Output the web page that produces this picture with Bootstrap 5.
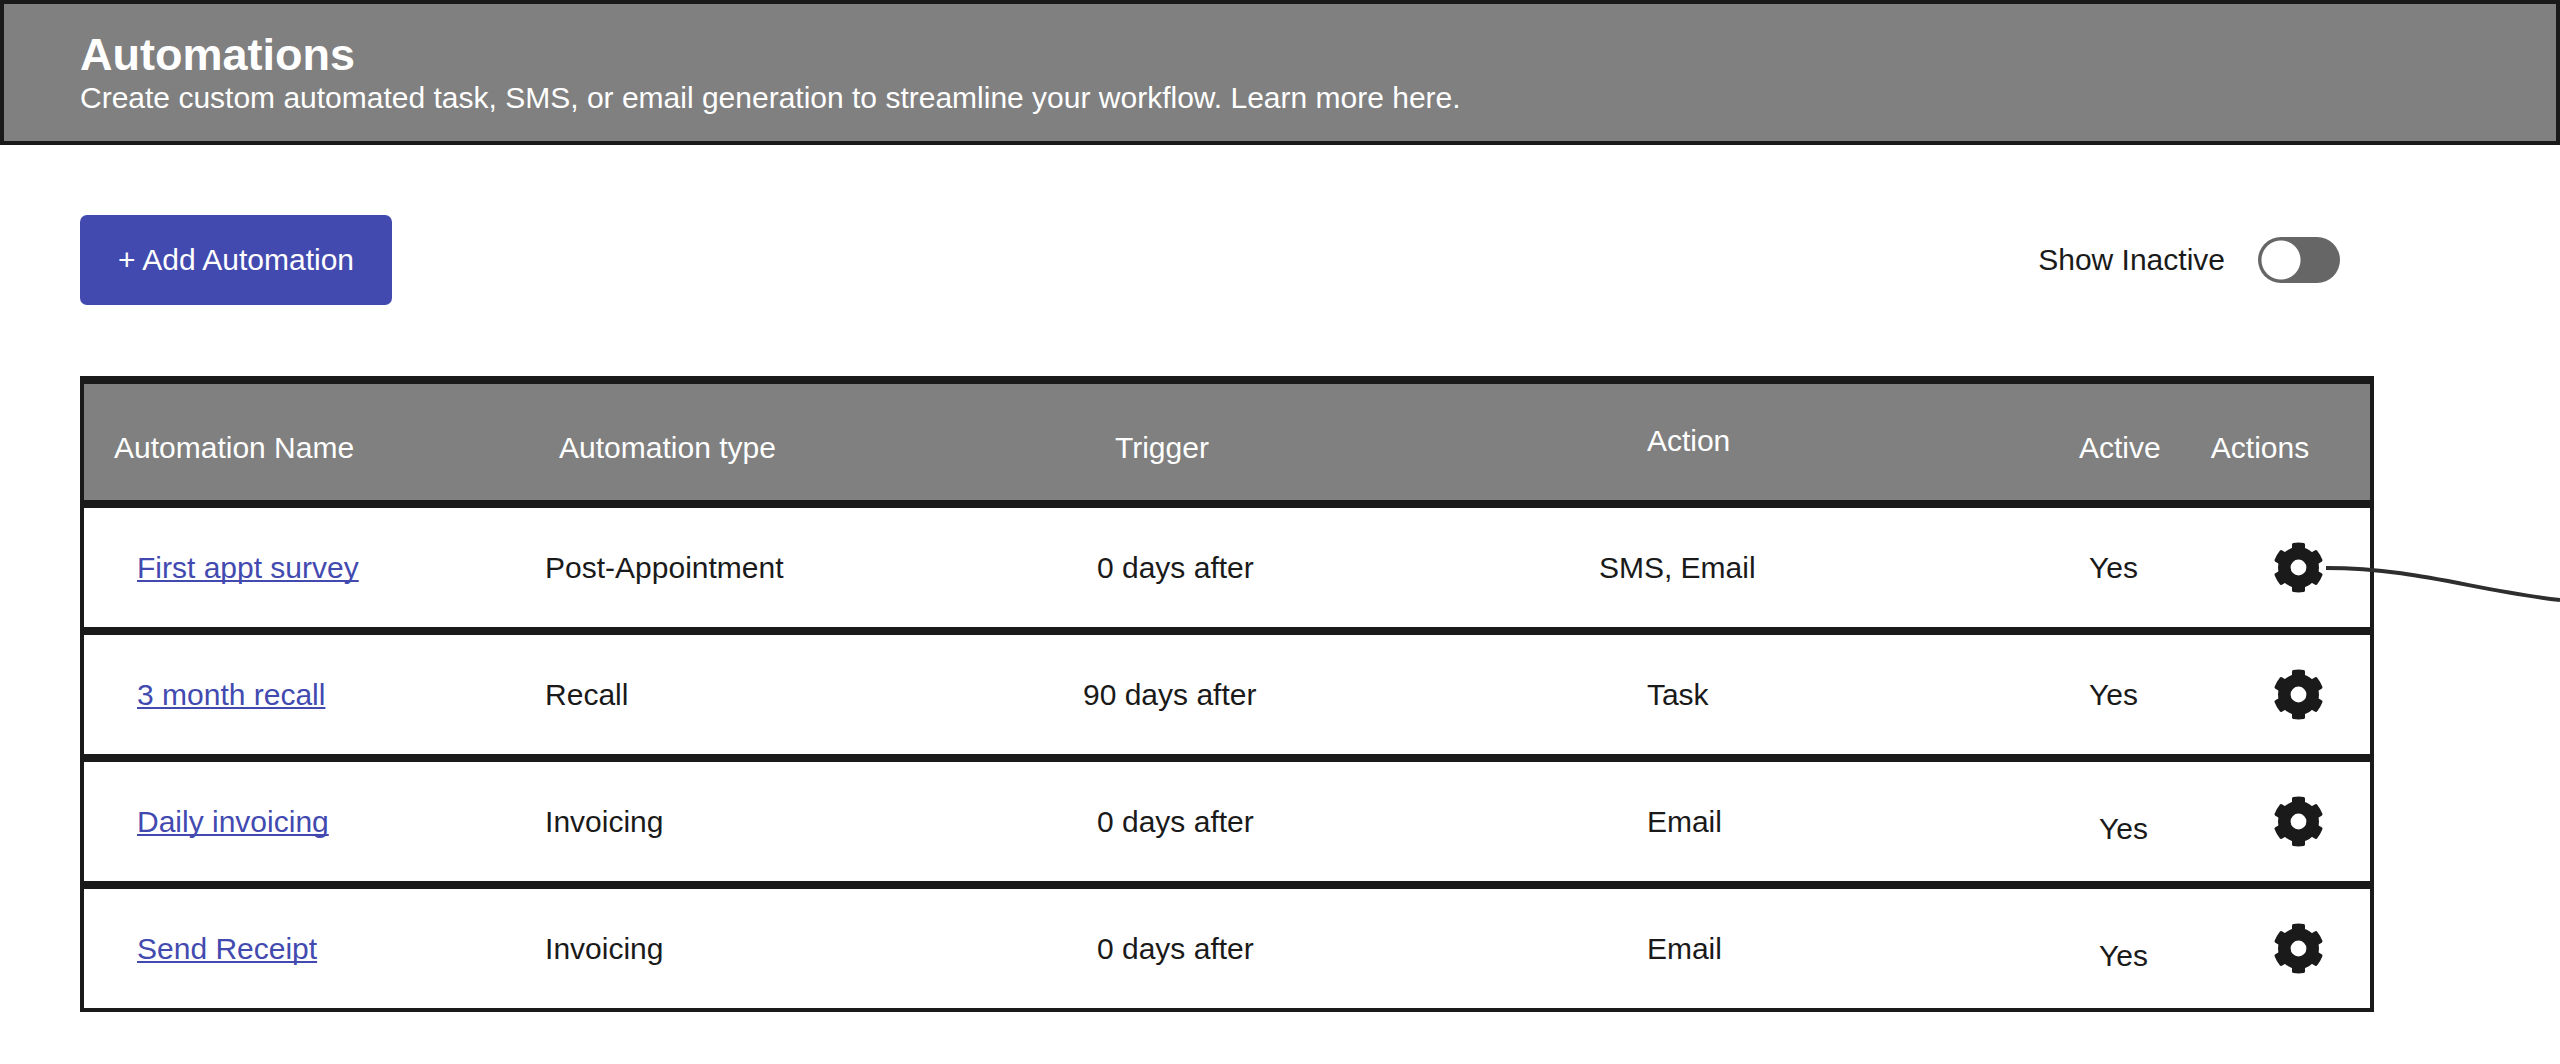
<!DOCTYPE html>
<html lang="en">
<head>
<meta charset="utf-8">
<meta name="viewport" content="width=device-width, initial-scale=1">
<title>Automations</title>
<link href="https://cdn.jsdelivr.net/npm/bootstrap@5.3.0/dist/css/bootstrap.min.css" rel="stylesheet">
<style>
  :root { --ink: #1a1a1a; --panel: #808080; --accent: #424ab0; }
  body { font-family: "Liberation Sans", Arial, sans-serif; font-size: 30px; line-height: 36px; color: var(--ink); background: #fff; }

  .page-head { background: var(--panel); border: 4px solid var(--ink); padding: 26px 76px 25px; }
  .page-head h1 { font-size: 45px; line-height: 50px; }

  .page-body { padding: 70px 186px 48px 80px; }

  .btn-add { --bs-btn-color: #fff; --bs-btn-bg: var(--accent); --bs-btn-hover-color: #fff; --bs-btn-hover-bg: #353c98;
             --bs-btn-padding-x: 38px; --bs-btn-padding-y: 27px; --bs-btn-font-size: 30px; --bs-btn-line-height: 36px;
             --bs-btn-border-width: 0; --bs-btn-border-radius: 7px; }

  .inactive-toggle { gap: 33px; padding-right: 34px; }
  .inactive-toggle .form-check-input { width: 82px; height: 46px; border: 0; border-radius: 23px; background-color: #666;
             background-image: radial-gradient(circle at 23px 23px, #fff 19px, transparent 20px); background-size: auto; background-position: 0 0; }
  .inactive-toggle .form-check-input:checked { background-color: var(--accent);
             background-image: radial-gradient(circle at 59px 23px, #fff 19px, transparent 20px); }

  .rules-frame { margin-top: 71px; border: 4px solid var(--ink); border-top-width: 8px; }
  .rules { table-layout: fixed; border-collapse: separate; border-spacing: 0; color: var(--ink); }
  .rules th { background: var(--panel); color: #fff; font-weight: 400; padding: 46px 0 34px; border-bottom: 8px solid var(--ink); white-space: nowrap; }
  .rules th.raised { padding-top: 39px; padding-bottom: 41px; }
  .rules td { padding: 34px 0; border-bottom: 8px solid var(--ink); vertical-align: middle; white-space: nowrap; }
  .rules tbody tr:last-child td { border-bottom: 0; }
  .rules td.lowered { padding-top: 49px; }
  .rules th:first-child { padding-left: 30px; }
  .rules td:first-child { padding-left: 53px; }
  .rules td:last-child { padding-right: 46px; }
  .rules a { color: var(--accent); text-decoration-thickness: 2px; text-underline-offset: 2px; text-decoration-skip-ink: none; }
  .rules .in-10 { padding-left: 10px; }
  .rules .in-14 { padding-left: 14px; }
  .rules .in-20 { padding-left: 20px; }
  .rules .in-32 { padding-left: 32px; }
  .rules .in-48 { padding-left: 48px; }

  .gear-btn { width: 51px; height: 51px; color: var(--ink); }
  .gear-btn svg { width: 51px; height: 51px; }
  .gear-wrap { width: 51px; }
  .connector { left: 100%; top: 50%; width: 236px; height: 40px; margin-top: -2px; pointer-events: none; }
</style>
</head>
<body>

<svg class="d-none" aria-hidden="true">
  <symbol id="gear" viewBox="-25.5 -25.5 51 51">
    <circle r="14.2" fill="none" stroke="currentColor" stroke-width="12.6"/>
    <g fill="currentColor">
      <path id="tooth" d="M-6.5-17V-23Q-6.5-24.4-5.2-24.6Q0-25.4 5.2-24.6Q6.5-24.4 6.5-23V-17Z"/>
      <use href="#tooth" transform="rotate(60)"/>
      <use href="#tooth" transform="rotate(120)"/>
      <use href="#tooth" transform="rotate(180)"/>
      <use href="#tooth" transform="rotate(240)"/>
      <use href="#tooth" transform="rotate(300)"/>
    </g>
  </symbol>
</svg>

<header class="page-head text-white">
  <h1 class="fw-bold mb-0">Automations</h1>
  <p class="mb-0">Create custom automated task, SMS, or email generation to streamline your workflow. Learn more here.</p>
</header>

<main class="page-body overflow-hidden">
  <div class="d-flex justify-content-between align-items-center">
    <button type="button" class="btn btn-add">+ Add Automation</button>
    <div class="inactive-toggle d-flex align-items-center">
      <label for="showInactive">Show Inactive</label>
      <input class="form-check-input m-0" type="checkbox" role="switch" id="showInactive">
    </div>
  </div>

  <div class="rules-frame">
    <table class="rules w-100">
      <colgroup>
        <col style="width:20.17%"><col style="width:23.53%"><col style="width:22.57%"><col style="width:21%"><col style="width:5.77%"><col style="width:6.96%">
      </colgroup>
      <thead>
        <tr>
          <th scope="col">Automation Name</th>
          <th scope="col" class="in-14">Automation type</th>
          <th scope="col" class="in-32">Trigger</th>
          <th scope="col" class="raised in-48">Action</th>
          <th scope="col">Active</th>
          <th scope="col">Actions</th>
        </tr>
      </thead>
      <tbody>
        <tr>
          <td><a href="#">First appt survey</a></td>
          <td>Post-Appointment</td>
          <td class="in-14">0 days after</td>
          <td>SMS, Email</td>
          <td class="in-10">Yes</td>
          <td>
            <div class="gear-wrap position-relative ms-auto">
              <button type="button" class="gear-btn btn p-0 border-0 d-block" aria-label="Actions for First appt survey"><svg class="d-block"><use href="#gear"/></svg></button>
              <svg class="connector position-absolute" viewBox="0 0 236 40" aria-hidden="true"><path d="M2 2C92 2 152 25 236 34" fill="none" stroke="#2e2e2e" stroke-width="4"/></svg>
            </div>
          </td>
        </tr>
        <tr>
          <td><a href="#">3 month recall</a></td>
          <td>Recall</td>
          <td>90 days after</td>
          <td class="in-48">Task</td>
          <td class="in-10">Yes</td>
          <td>
            <div class="gear-wrap ms-auto">
              <button type="button" class="gear-btn btn p-0 border-0 d-block" aria-label="Actions for 3 month recall"><svg class="d-block"><use href="#gear"/></svg></button>
            </div>
          </td>
        </tr>
        <tr>
          <td><a href="#">Daily invoicing</a></td>
          <td>Invoicing</td>
          <td class="in-14">0 days after</td>
          <td class="in-48">Email</td>
          <td class="lowered in-20">Yes</td>
          <td>
            <div class="gear-wrap ms-auto">
              <button type="button" class="gear-btn btn p-0 border-0 d-block" aria-label="Actions for Daily invoicing"><svg class="d-block"><use href="#gear"/></svg></button>
            </div>
          </td>
        </tr>
        <tr>
          <td><a href="#">Send Receipt</a></td>
          <td>Invoicing</td>
          <td class="in-14">0 days after</td>
          <td class="in-48">Email</td>
          <td class="lowered in-20">Yes</td>
          <td>
            <div class="gear-wrap ms-auto">
              <button type="button" class="gear-btn btn p-0 border-0 d-block" aria-label="Actions for Send Receipt"><svg class="d-block"><use href="#gear"/></svg></button>
            </div>
          </td>
        </tr>
      </tbody>
    </table>
  </div>
</main>

<script src="https://cdn.jsdelivr.net/npm/bootstrap@5.3.0/dist/js/bootstrap.bundle.min.js"></script>
</body>
</html>
